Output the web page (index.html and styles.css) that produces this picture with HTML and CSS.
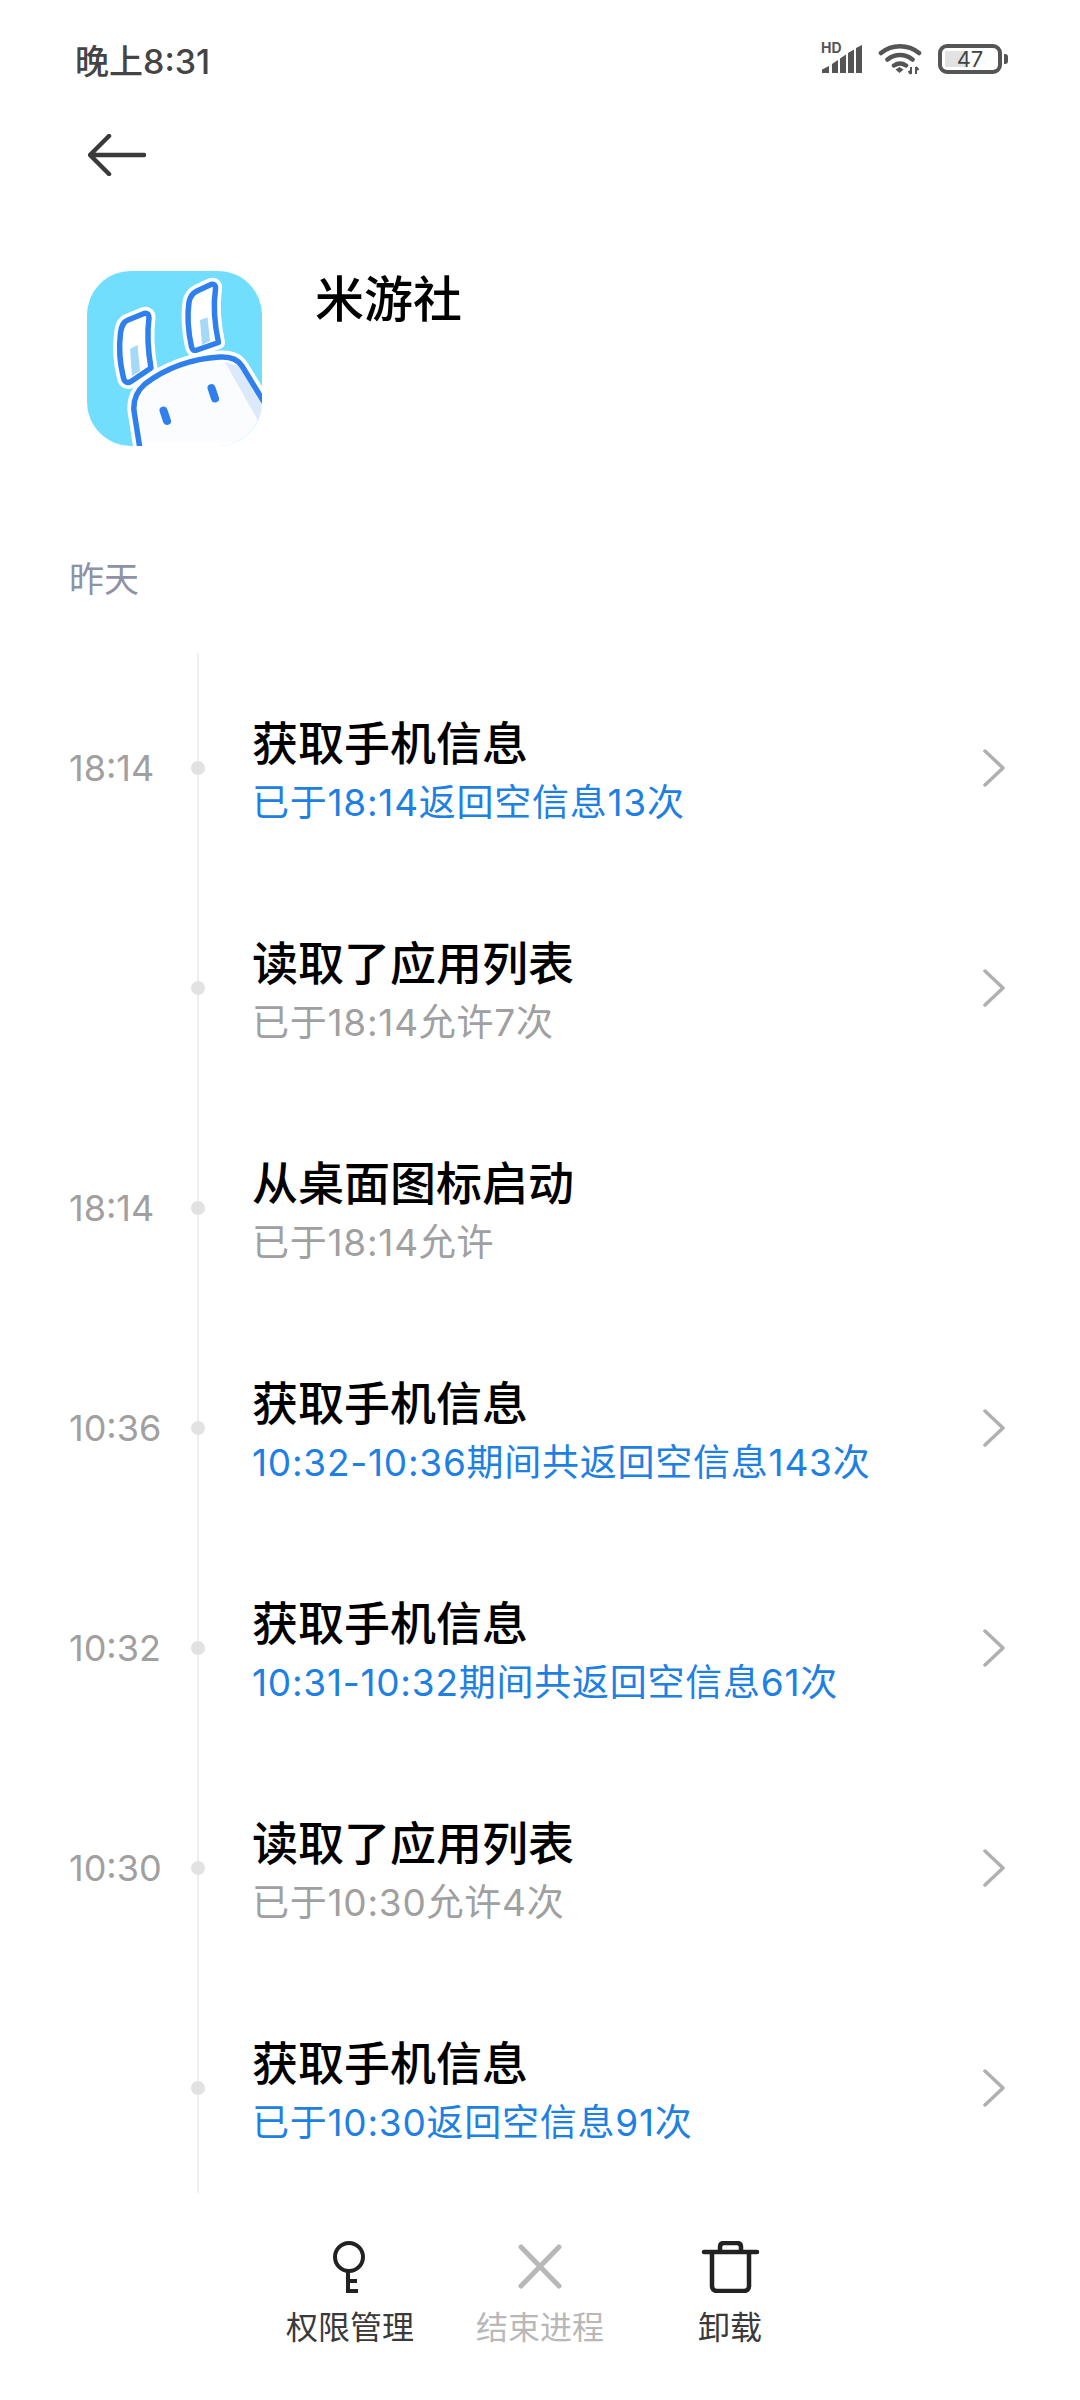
FILE: index.html
```html
<!DOCTYPE html>
<html lang="zh-CN">
<head>
   <meta charset="UTF-8">
   <meta name="viewport" content="width=device-width, initial-scale=1.0">
   <title>米游社</title>
   <link rel="stylesheet" href="styles.css">
</head>
<body>

   <div class="status">
       <span class="status-time">晚上8:31</span>
       <div class="status-icons">
           <div class="signal">
               <span class="signal-hd">HD</span>
               <svg width="40" height="28" viewBox="0 0 40 28"><path d="M0 24.500L7 21V28H0ZM10 19L16 15V28H10ZM18 13.500L24 9.500V28H18ZM26 8L32 4.500V28H26ZM34 3L40 0V28H34Z" fill="#555"/></svg>
           </div>
           <svg class="wifi" width="44" height="32" viewBox="0 0 44 32">
               <path d="M3 10C14 1 30 1 41 10M9.500 16.500C17 10.500 27 10.500 34.500 16.500M16 22.500C20 19.800 24 19.800 28 22.500" fill="none" stroke="#555" stroke-width="4.500" stroke-linecap="round"/>
               <path d="M17.500 26.500L21.500 24L25.500 26.500L21.500 30Z" fill="#555"/>
               <path d="M33 24v7M30.500 28l2.500 3M38 31v-7M38 24l2.500 3" fill="none" stroke="#555" stroke-width="2"/>
           </svg>
           <div class="battery">
               <div class="battery-body">
                   <div class="battery-fill"></div>
                   <span class="battery-num">47</span>
               </div>
               <div class="battery-nub"></div>
           </div>
       </div>
   </div>

   <div class="topbar">
       <svg width="58" height="42" viewBox="0 0 58 42"><path d="M21 2L2 21L21 40M3 21H56" fill="none" stroke="#3a3a3a" stroke-width="4.500" stroke-linecap="round" stroke-linejoin="round"/></svg>
   </div>

   <div class="app">
       <svg class="app-icon" width="175" height="175" viewBox="0 0 175 175">
           <defs>
               <clipPath id="iconClip"><rect width="175" height="175" rx="44"/></clipPath>
           </defs>
           <g clip-path="url(#iconClip)">
               <rect width="175" height="175" fill="#72defe"/>
               <path d="M57 42.500C60.500 41.500 62 43.500 62 46.500C60 62 61 80 64 97L44 110.500C40 112.500 37.500 111 36.500 107C33 93 31.500 78 33.500 62C34.500 55 36 51 41 49Z" fill="#fff" stroke="#fff" stroke-width="13" stroke-linejoin="round"/>
               <path d="M43 78L50.500 74L53 100L45 105Z" fill="#a6d8f8"/>
               <path d="M57 42.500C60.500 41.500 62 43.500 62 46.500C60 62 61 80 64 97L44 110.500C40 112.500 37.500 111 36.500 107C33 93 31.500 78 33.500 62C34.500 55 36 51 41 49Z" fill="none" stroke="#2f80ed" stroke-width="5.500" stroke-linejoin="round"/>
               <path d="M124 13.500C127.500 12.500 129 14.500 128.500 18C126 35 127.500 53 131.500 71.500L110 79C107 80 105.500 79 104.500 76C101.500 62 100 45 102 31C103 26 105 22.500 110 20Z" fill="#fff" stroke="#fff" stroke-width="13" stroke-linejoin="round"/>
               <path d="M113 49L120.500 46.500L123 70L115 74Z" fill="#a6d8f8"/>
               <path d="M124 13.500C127.500 12.500 129 14.500 128.500 18C126 35 127.500 53 131.500 71.500L110 79C107 80 105.500 79 104.500 76C101.500 62 100 45 102 31C103 26 105 22.500 110 20Z" fill="none" stroke="#2f80ed" stroke-width="5.500" stroke-linejoin="round"/>
               <path d="M53 178L47 140C46 128 50 120 58 113C75 100 100 88 133 86C142 85.500 150 87 155 95L180 136V178Z" fill="#fbfcfd" stroke="#fff" stroke-width="13"/>
               <path d="M138 91L154 96L178 135V162Z" fill="#dbe9fa"/>
               <path d="M53 178L47 140C46 128 50 120 58 113C75 100 100 88 133 86C142 85.500 150 87 155 95L180 136" fill="none" stroke="#2f80ed" stroke-width="5.500"/>
               <path d="M76.500 139.500L80 150M124.500 117L128 127.500" fill="none" stroke="#2f80ed" stroke-width="8" stroke-linecap="round"/>
           </g>
       </svg>
       <span class="app-name">米游社</span>
   </div>

   <div class="day">昨天</div>

   <div class="timeline">
       <div class="row">
           <span class="row-time">18:14</span>
           <span class="dot"></span>
           <div class="row-text">
               <div class="row-title">获取手机信息</div>
               <div class="row-sub blue">已于18:14返回空信息13次</div>
           </div>
           <svg class="chevron" width="22" height="38" viewBox="0 0 22 38"><path d="M2 2L20 19L2 36" fill="none" stroke="#b0b0b0" stroke-width="3.500" stroke-linecap="round" stroke-linejoin="round"/></svg>
       </div>
       <div class="row">
           <span class="row-time"></span>
           <span class="dot"></span>
           <div class="row-text">
               <div class="row-title">读取了应用列表</div>
               <div class="row-sub">已于18:14允许7次</div>
           </div>
           <svg class="chevron" width="22" height="38" viewBox="0 0 22 38"><path d="M2 2L20 19L2 36" fill="none" stroke="#b0b0b0" stroke-width="3.500" stroke-linecap="round" stroke-linejoin="round"/></svg>
       </div>
       <div class="row">
           <span class="row-time">18:14</span>
           <span class="dot"></span>
           <div class="row-text">
               <div class="row-title">从桌面图标启动</div>
               <div class="row-sub">已于18:14允许</div>
           </div>
       </div>
       <div class="row">
           <span class="row-time">10:36</span>
           <span class="dot"></span>
           <div class="row-text">
               <div class="row-title">获取手机信息</div>
               <div class="row-sub blue">10:32-10:36期间共返回空信息143次</div>
           </div>
           <svg class="chevron" width="22" height="38" viewBox="0 0 22 38"><path d="M2 2L20 19L2 36" fill="none" stroke="#b0b0b0" stroke-width="3.500" stroke-linecap="round" stroke-linejoin="round"/></svg>
       </div>
       <div class="row">
           <span class="row-time">10:32</span>
           <span class="dot"></span>
           <div class="row-text">
               <div class="row-title">获取手机信息</div>
               <div class="row-sub blue">10:31-10:32期间共返回空信息61次</div>
           </div>
           <svg class="chevron" width="22" height="38" viewBox="0 0 22 38"><path d="M2 2L20 19L2 36" fill="none" stroke="#b0b0b0" stroke-width="3.500" stroke-linecap="round" stroke-linejoin="round"/></svg>
       </div>
       <div class="row">
           <span class="row-time">10:30</span>
           <span class="dot"></span>
           <div class="row-text">
               <div class="row-title">读取了应用列表</div>
               <div class="row-sub">已于10:30允许4次</div>
           </div>
           <svg class="chevron" width="22" height="38" viewBox="0 0 22 38"><path d="M2 2L20 19L2 36" fill="none" stroke="#b0b0b0" stroke-width="3.500" stroke-linecap="round" stroke-linejoin="round"/></svg>
       </div>
       <div class="row">
           <span class="row-time"></span>
           <span class="dot"></span>
           <div class="row-text">
               <div class="row-title">获取手机信息</div>
               <div class="row-sub blue">已于10:30返回空信息91次</div>
           </div>
           <svg class="chevron" width="22" height="38" viewBox="0 0 22 38"><path d="M2 2L20 19L2 36" fill="none" stroke="#b0b0b0" stroke-width="3.500" stroke-linecap="round" stroke-linejoin="round"/></svg>
       </div>
   </div>

   <div class="actions">
       <div class="action">
           <svg width="60" height="52" viewBox="0 0 60 52"><circle cx="29" cy="16" r="14" fill="none" stroke="#222" stroke-width="4"/><path d="M28 30V50H38M28 40H37" fill="none" stroke="#222" stroke-width="4"/></svg>
           <span>权限管理</span>
       </div>
       <div class="action off">
           <svg width="60" height="52" viewBox="0 0 60 52"><path d="M11 6L49 45M49 6L11 45" fill="none" stroke="#b8b8b8" stroke-width="5" stroke-linecap="round"/></svg>
           <span>结束进程</span>
       </div>
       <div class="action">
           <svg width="60" height="52" viewBox="0 0 60 52"><path d="M4 11H57M12 11V45C12 48 14 50 17 50H44C47 50 49 48 49 45V11M20 11V6C20 3 22 2 24 2H37C39 2 41 3 41 6V11" fill="none" stroke="#222" stroke-width="4.500" stroke-linecap="round"/></svg>
           <span>卸载</span>
       </div>
   </div>

</body>
</html>
```

FILE: styles.css
```css
body {
    margin: 0;
    width: 1080px;
    height: 2400px;
    background-color: #fff;
    font-family: Inter, "Noto Sans CJK SC", sans-serif;
    overflow: hidden;
}

/* barra de estado */
.status {
    height: 118px;
    margin-bottom: 2px;
    display: flex;
    justify-content: space-between;
    align-items: center;
    padding: 0 72px 0 75px;
}
.status-time {
    font-size: 34px;
    font-weight: 500;
    color: #444;
}
.status-icons {
    display: flex;
    align-items: center;
    gap: 16px;
}
.signal {
    position: relative;
    width: 40px;
    height: 28px;
}
.signal svg {
    display: block;
}
.signal-hd {
    position: absolute;
    left: -1px;
    top: -4px;
    font-size: 14px;
    line-height: 14px;
    font-weight: 700;
    color: #555;
}
.battery {
    display: flex;
    align-items: center;
    gap: 2px;
}
.battery-body {
    position: relative;
    width: 56px;
    height: 22px;
    border: 4px solid #555;
    border-radius: 9px;
    display: flex;
    align-items: center;
    justify-content: center;
}
.battery-fill {
    position: absolute;
    left: 3px;
    top: 3px;
    bottom: 3px;
    width: 20px;
    background-color: #e2e2e2;
}
.battery-num {
    position: relative;
    font-size: 22px;
    color: #444;
}
.battery-nub {
    width: 4px;
    height: 10px;
    background-color: #555;
    border-radius: 0 3px 3px 0;
}

.topbar {
    height: 70px;
    display: flex;
    align-items: center;
    padding-left: 88px;
}

/* cabecera app */
.app {
    display: flex;
    align-items: flex-start;
    margin-top: 81px;
    padding-left: 87px;
}
.app-name {
    margin-left: 53px;
    font-size: 49px;
    font-weight: 500;
    line-height: 58px;
    color: #000;
}

.day {
    margin-top: 110px;
    padding-left: 69px;
    font-size: 35px;
    line-height: 46px;
    color: #8d92a6;
}

/* linea de tiempo */
.timeline {
    position: relative;
    margin-top: 51px;
    padding-top: 5px;
    height: 1535px;
    overflow: hidden;
}
.timeline::before {
    content: "";
    position: absolute;
    left: 197px;
    top: 0;
    bottom: 0;
    width: 2px;
    background-color: #f0f0f0;
}
.row {
    display: grid;
    grid-template-columns: 122px 14px 1fr 22px;
    align-items: center;
    height: 220px;
    padding: 0 75px 0 69px;
}
.row-time {
    font-size: 36px;
    color: #a0a0a0;
}
.dot {
    position: relative;
    width: 14px;
    height: 14px;
    border-radius: 50%;
    background-color: #e2e2e2;
}
.row-text {
    margin-left: 47px;
    margin-top: 5px;
}
.row-title {
    font-size: 46px;
    font-weight: 500;
    line-height: 60px;
    color: #000;
}
.row-sub {
    font-size: 37px;
    letter-spacing: 0.75px;
    line-height: 52px;
    margin-top: 4px;
    color: #a0a0a0;
}
.blue {
    color: #1d80e2;
}

/* barra inferior */
.actions {
    display: flex;
    justify-content: center;
    padding-top: 48px;
}
.action {
    width: 190px;
    display: flex;
    flex-direction: column;
    align-items: center;
    font-size: 32px;
    line-height: 46px;
    color: #3a3a3a;
}
.action svg {
    margin-bottom: 12px;
}
.action.off {
    color: #b8b8b8;
}
```
